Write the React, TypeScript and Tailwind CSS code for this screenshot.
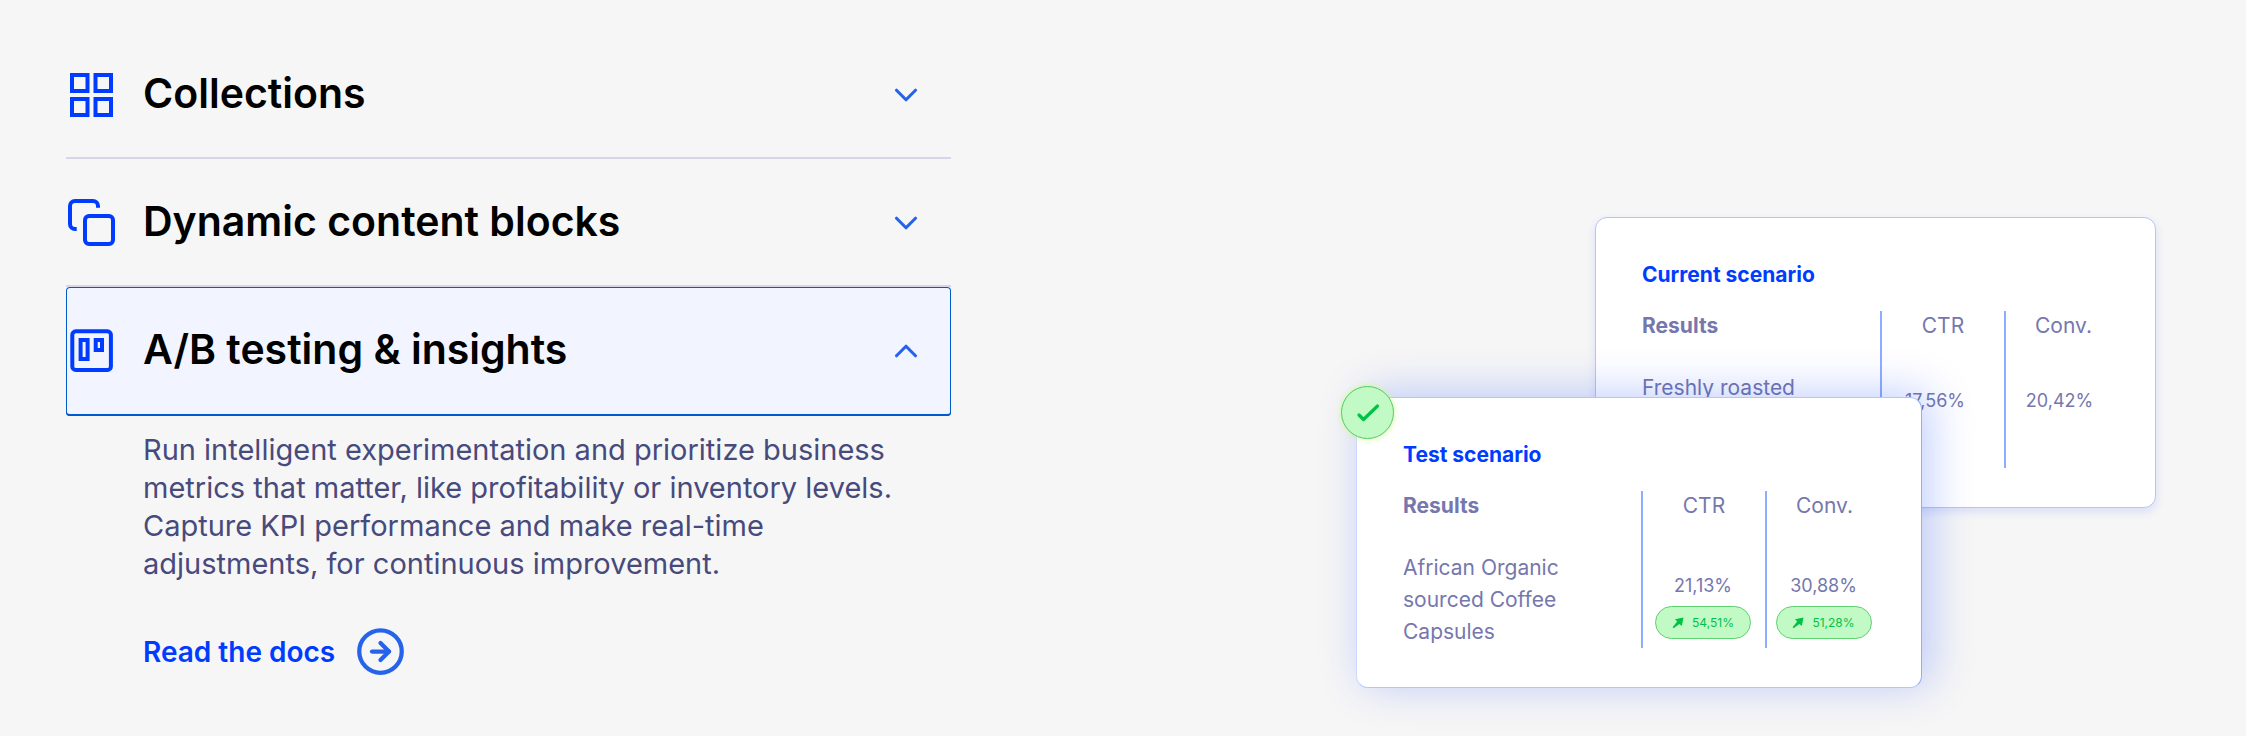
import React from "react";
import { ChevronDown, ChevronUp, CircleArrowRight } from "lucide-react";

function GridIcon() {
  return (
    <svg className="size-[50px]" viewBox="0 0 50 50" fill="none" stroke="#003cff" strokeWidth="4" aria-hidden="true">
      <rect x="6" y="5" width="15.5" height="16" />
      <rect x="29.5" y="5" width="15.5" height="16" />
      <rect x="6" y="29" width="15.5" height="16" />
      <rect x="29.5" y="29" width="15.5" height="16" />
    </svg>
  );
}

function BlocksIcon() {
  return (
    <svg className="size-[50px]" viewBox="0 0 50 50" fill="none" stroke="#003cff" strokeWidth="4" aria-hidden="true">
      <rect x="19" y="18" width="28" height="28" rx="4" />
      <path d="M10.7 31H9a5 5 0 0 1-5-5V8a5 5 0 0 1 5-5h18a5 5 0 0 1 5 5v1.7" />
    </svg>
  );
}

function BoardIcon() {
  return (
    <svg className="size-[50px]" viewBox="0 0 50 50" fill="none" stroke="#003cff" strokeWidth="4" aria-hidden="true">
      <rect x="6.3" y="5.3" width="38.6" height="38.6" rx="3.5" />
      <rect x="14.6" y="14" width="7" height="19" />
      <rect x="29.7" y="14" width="6.3" height="10" />
    </svg>
  );
}

interface RowProps {
  icon: React.ReactNode;
  title: string;
  open?: boolean;
}

function AccordionRow({ icon, title, open = false }: RowProps) {
  const Chevron = open ? ChevronUp : ChevronDown;
  return (
    <h3>
      <button
        type="button"
        aria-expanded={open}
        className={
          open
            ? "flex h-[129px] w-full items-center rounded-[4px] bg-[#f2f4ff] pr-[26px] pb-px text-left shadow-[inset_0_0_0_1px_#005ccc,inset_0_-2px_0_#005ccc]"
            : "flex h-32 w-full items-center border-b-2 border-[#d8d5ea] pt-0.5 pr-[26px] text-left"
        }
      >
        {icon}
        <span className="ml-[27px] flex-1 pb-1 text-[41px] leading-[48px] font-semibold text-black">{title}</span>
        <Chevron className="size-[38px] text-[#2563eb]" />
      </button>
    </h3>
  );
}

interface Metric {
  value: string;
  lift?: string;
}

interface ScenarioProps {
  title: string;
  product: string;
  ctr: Metric;
  conv: Metric;
}

function MetricCell({ value, lift }: Metric) {
  return (
    <div className="flex flex-col items-center">
      <span className="text-[18px] leading-6">{value}</span>
      {lift && (
        <span className="mt-2 flex h-[33px] w-24 items-center justify-center gap-2 rounded-full border border-[#5fd070] bg-[#c1fac5] text-[12px] text-[#00c244]">
          <svg className="size-3" viewBox="0 0 12 12" aria-hidden="true">
            <path d="M3 2.2 11.5.5 9.8 9 7.4 6.9 1.6 11.2.6 10.2 5.2 4.6z" fill="#00c244" />
          </svg>
          {lift}
        </span>
      )}
    </div>
  );
}

function Scenario({ title, product, ctr, conv }: ScenarioProps) {
  return (
    <>
      <h4 className="text-[21px] leading-6 font-bold text-[#003cff]">{title}</h4>
      <table className="mt-6 w-full table-fixed text-[21px] text-[#7577ad]">
        <thead>
          <tr className="h-8 leading-7">
            <th className="pb-0.5 text-left font-bold">Results</th>
            <th className="w-[124px] border-l-2 border-[#8fadff] pb-0.5 font-normal">CTR</th>
            <th className="w-[116px] border-l-2 border-[#8fadff] pb-0.5 font-normal">Conv.</th>
          </tr>
        </thead>
        <tbody>
          <tr className="h-[125px] align-top">
            <td className="pt-[29px] pr-12 leading-8">{product}</td>
            <td className={ctr.lift ? "border-l-2 border-[#8fadff] pt-[51px] pr-0.5" : "border-l-2 border-[#8fadff] pt-[46px] pr-4"}>
              <MetricCell {...ctr} />
            </td>
            <td className={conv.lift ? "border-l-2 border-[#8fadff] pt-[51px] pr-0.5" : "border-l-2 border-[#8fadff] pt-[46px] pr-2"}>
              <MetricCell {...conv} />
            </td>
          </tr>
        </tbody>
      </table>
    </>
  );
}

export default function App() {
  return (
    <main className="grid min-h-screen grid-cols-[885fr_1205fr] bg-[#f6f6f6] pt-[31px] pr-[90px] pl-[66px] font-['Inter','Liberation_Sans',sans-serif]">
      {/* Feature accordion */}
      <section>
        <AccordionRow icon={<GridIcon />} title="Collections" />
        <AccordionRow icon={<BlocksIcon />} title="Dynamic content blocks" />
        <AccordionRow icon={<BoardIcon />} title="A/B testing & insights" open />
        <div className="pt-[15px] pr-12 pl-[77px]">
          <p className="text-[29px] leading-[38px] text-[#474a7c]">
            Run intelligent experimentation and prioritize business metrics that matter, like profitability or inventory
            levels. Capture KPI performance and make real-time adjustments, for continuous improvement.
          </p>
          <a href="#docs" className="mt-[43px] inline-flex items-center gap-5 text-[28px] font-semibold text-[#003cff]">
            Read the docs
            <CircleArrowRight className="size-[51px] text-[#2563eb]" />
          </a>
        </div>
      </section>

      {/* Scenario comparison */}
      <section className="flex w-[800px] flex-col justify-self-end pt-[186px]">
        <div className="h-[291px] w-[561px] self-end rounded-xl border border-[#b3c5ff] bg-white pt-[45px] pr-[34px] pl-[46px] shadow-[0_4px_10px_rgba(0,60,255,0.12)]">
          <Scenario
            title="Current scenario"
            product="Freshly roasted"
            ctr={{ value: "17,56%" }}
            conv={{ value: "20,42%" }}
          />
        </div>
        <div className="relative -mt-[111px] h-[291px] w-[566px] rounded-xl border border-t-[#b3c5ff] border-r-[#8fadff] border-b-[#b3c5ff] border-l-[#cdd8ff] bg-white pt-[45px] pr-[39px] pl-[46px] shadow-[8px_-4px_44px_rgba(0,60,255,0.25)]">
          <span className="absolute -top-3 -left-4 flex size-[53px] items-center justify-center rounded-full border border-[#56c965] bg-[#c1fac5] shadow-[0_0_6px_rgba(190,255,120,0.7)]">
            <svg className="size-6" viewBox="0 0 24 24" fill="none" aria-hidden="true">
              <path d="M3 14 7.5 18.5 21.5 5" stroke="#00c244" strokeWidth="3.2" strokeLinecap="round" strokeLinejoin="round" />
            </svg>
          </span>
          <Scenario
            title="Test scenario"
            product="African Organic sourced Coffee Capsules"
            ctr={{ value: "21,13%", lift: "54,51%" }}
            conv={{ value: "30,88%", lift: "51,28%" }}
          />
        </div>
      </section>
    </main>
  );
}
